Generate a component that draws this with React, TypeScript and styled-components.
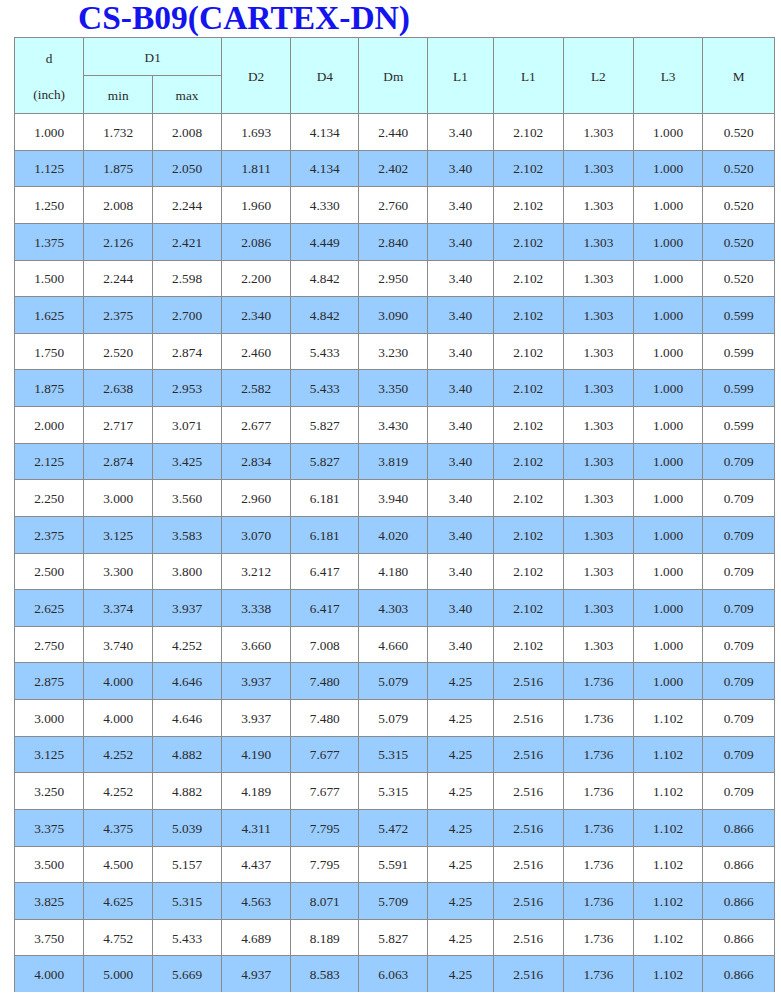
import React from "react";
import styled, { createGlobalStyle } from "styled-components";

const Global = createGlobalStyle`
  html, body { margin: 0; padding: 0; background: #ffffff; }
  body { font-family: "Liberation Serif", "Times New Roman", serif; }
`;

const serif = `"Liberation Serif", "Times New Roman", serif`;

const Page = styled.div`
  width: 781px;
  display: flex;
  flex-direction: column;
`;

const Title = styled.h1`
  margin: 0;
  padding-left: 78px;
  height: 37px;
  font-family: ${serif};
  font-weight: 700;
  font-size: 33.5px;
  line-height: 35px;
  color: #1414ee;
`;

const Table = styled.table`
  margin-left: 14px;
  width: 761px;
  border-collapse: collapse;
  table-layout: fixed;
  border: 1px solid #666;
  font-family: ${serif};
  font-size: 13.3px;
  color: #2a2a2a;
`;

const HeadCell = styled.th`
  background: #ccffff;
  border: 1px solid #8a8a8a;
  font-family: ${serif};
  font-size: 13.3px;
  font-weight: 400;
  color: #2a2a2a;
  text-align: center;
  padding: 3px 0 0;
  height: 33.5px;
`;

const Stack = styled.div`
  display: flex;
  flex-direction: column;
  align-items: center;
  line-height: 36px;
`;

const Row = styled.tr<{ $alt: boolean }>`
  height: 36.6px;
  background: ${(p) => (p.$alt ? "#99ccff" : "#ffffff")};
`;

const Cell = styled.td`
  border: 1px solid #8a8a8a;
  font-family: ${serif};
  font-size: 13.3px;
  color: #2a2a2a;
  text-align: center;
  padding: 2px 0 0;
`;

const widths = [69.3, 68.7, 69, 69, 68.3, 68.7, 65.6, 70, 70, 69.4, 71.6];

const data = `1.000 1.732 2.008 1.693 4.134 2.440 3.40 2.102 1.303 1.000 0.520
1.125 1.875 2.050 1.811 4.134 2.402 3.40 2.102 1.303 1.000 0.520
1.250 2.008 2.244 1.960 4.330 2.760 3.40 2.102 1.303 1.000 0.520
1.375 2.126 2.421 2.086 4.449 2.840 3.40 2.102 1.303 1.000 0.520
1.500 2.244 2.598 2.200 4.842 2.950 3.40 2.102 1.303 1.000 0.520
1.625 2.375 2.700 2.340 4.842 3.090 3.40 2.102 1.303 1.000 0.599
1.750 2.520 2.874 2.460 5.433 3.230 3.40 2.102 1.303 1.000 0.599
1.875 2.638 2.953 2.582 5.433 3.350 3.40 2.102 1.303 1.000 0.599
2.000 2.717 3.071 2.677 5.827 3.430 3.40 2.102 1.303 1.000 0.599
2.125 2.874 3.425 2.834 5.827 3.819 3.40 2.102 1.303 1.000 0.709
2.250 3.000 3.560 2.960 6.181 3.940 3.40 2.102 1.303 1.000 0.709
2.375 3.125 3.583 3.070 6.181 4.020 3.40 2.102 1.303 1.000 0.709
2.500 3.300 3.800 3.212 6.417 4.180 3.40 2.102 1.303 1.000 0.709
2.625 3.374 3.937 3.338 6.417 4.303 3.40 2.102 1.303 1.000 0.709
2.750 3.740 4.252 3.660 7.008 4.660 3.40 2.102 1.303 1.000 0.709
2.875 4.000 4.646 3.937 7.480 5.079 4.25 2.516 1.736 1.000 0.709
3.000 4.000 4.646 3.937 7.480 5.079 4.25 2.516 1.736 1.102 0.709
3.125 4.252 4.882 4.190 7.677 5.315 4.25 2.516 1.736 1.102 0.709
3.250 4.252 4.882 4.189 7.677 5.315 4.25 2.516 1.736 1.102 0.709
3.375 4.375 5.039 4.311 7.795 5.472 4.25 2.516 1.736 1.102 0.866
3.500 4.500 5.157 4.437 7.795 5.591 4.25 2.516 1.736 1.102 0.866
3.825 4.625 5.315 4.563 8.071 5.709 4.25 2.516 1.736 1.102 0.866
3.750 4.752 5.433 4.689 8.189 5.827 4.25 2.516 1.736 1.102 0.866
4.000 5.000 5.669 4.937 8.583 6.063 4.25 2.516 1.736 1.102 0.866`
  .split("\n")
  .map((l) => l.trim().split(/\s+/));

const singles = ["D2", "D4", "Dm", "L1", "L1", "L2", "L3", "M"];

export default function App() {
  return (
    <Page>
      <Global />
      <Title>CS-B09(CARTEX-DN)</Title>
      <Table>
        <colgroup>
          {widths.map((w, i) => (
            <col key={i} style={{ width: `${w}px` }} />
          ))}
        </colgroup>
        <thead>
          <tr>
            <HeadCell rowSpan={2}>
              <Stack>
                <span>d</span>
                <span>(inch)</span>
              </Stack>
            </HeadCell>
            <HeadCell colSpan={2}>D1</HeadCell>
            {singles.map((s, i) => (
              <HeadCell key={i} rowSpan={2}>
                {s}
              </HeadCell>
            ))}
          </tr>
          <tr>
            <HeadCell>min</HeadCell>
            <HeadCell>max</HeadCell>
          </tr>
        </thead>
        <tbody>
          {data.map((r, i) => (
            <Row key={i} $alt={i % 2 === 1}>
              {r.map((v, j) => (
                <Cell key={j}>{v}</Cell>
              ))}
            </Row>
          ))}
        </tbody>
      </Table>
    </Page>
  );
}
